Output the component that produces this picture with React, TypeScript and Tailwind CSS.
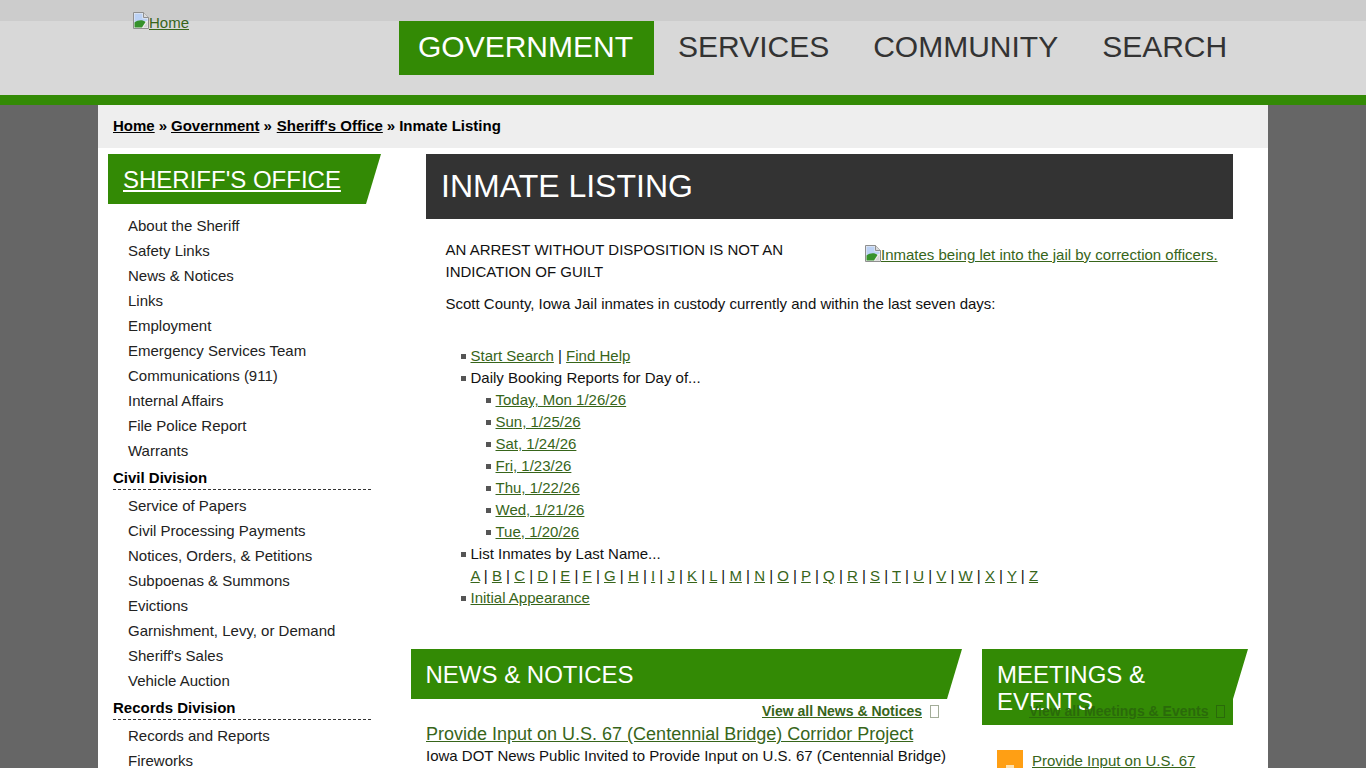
const BrokenImg = () => (
  <svg width="16" height="17" viewBox="0 0 16 17" className="inline-block shrink-0 align-baseline">
    <path d="M0.5 0.5H10.5L15.5 5.5V16.5H0.5Z" fill="#f0f0f0" stroke="#8f8f8f" />
    <path d="M10.5 0.5V5.5H15.5" fill="#dcdcdc" stroke="#8f8f8f" />
    <path d="M1.5 1.5H9.5V6.5H14.5V9L1.5 11Z" fill="#bcd2f5" />
    <path d="M1.5 15.5V10.5C5 7.5 10 7.5 12.5 10L9 15.5Z" fill="#36922c" />
    <path d="M10 15.5L14.5 9.5V15.5Z" fill="#d4d4d4" />
  </svg>
);

const green = "text-[#37651a]";

const L = ({ children }: { children: React.ReactNode }) => (
  <a href="#" className="text-[#37651a] underline">{children}</a>
);

const Tofu = ({ c }: { c: string }) => <span className={`inline-block h-[13px] w-[9px] border ${c}`} />;

const sheriff = ["About the Sheriff", "Safety Links", "News & Notices", "Links", "Employment", "Emergency Services Team", "Communications (911)", "Internal Affairs", "File Police Report", "Warrants"];
const civil = ["Service of Papers", "Civil Processing Payments", "Notices, Orders, & Petitions", "Subpoenas & Summons", "Evictions", "Garnishment, Levy, or Demand", "Sheriff's Sales", "Vehicle Auction"];
const records = ["Records and Reports", "Fireworks"];
const days = ["Today, Mon 1/26/26", "Sun, 1/25/26", "Sat, 1/24/26", "Fri, 1/23/26", "Thu, 1/22/26", "Wed, 1/21/26", "Tue, 1/20/26"];
const letters = "A B C D E F G H I J K L M N O P Q R S T U V W X Y Z".split(" ");

const Nav = ({ items }: { items: string[] }) => (
  <ul>
    {items.map((t) => (
      <li key={t} className="h-[25px] pl-[30px] leading-[25px] text-[#222]">{t}</li>
    ))}
  </ul>
);

const Sec = ({ children }: { children: React.ReactNode }) => (
  <div className="mt-[2px] ml-[15px] h-[25px] w-[258px] border-b border-dashed border-[#333] font-bold leading-[26px] text-black">{children}</div>
);

const Bullet = ({ children, x = "" }: { children: React.ReactNode; x?: string }) => (
  <li className={`relative h-[22px] leading-[22px] ${x}`}>
    <span className="absolute left-[-10px] top-[9px] h-[5px] w-[5px] bg-[#555]" />
    {children}
  </li>
);

export default function App() {
  return (
    <div className="h-[768px] overflow-hidden bg-[#666] text-[15px] text-[#111]" style={{ fontFamily: '"Liberation Sans", Arial, sans-serif' }}>
      <header className="h-[105px] border-b-[10px] border-[#338a05] bg-[#d8d8d8]">
        <div className="h-[21px] bg-[#ccc]" />
        <div className="relative flex h-[74px] pl-[399px]">
          <a href="#" className="absolute left-[133px] top-[-9px] flex items-start text-[15px] text-[#37651a] underline">
            <BrokenImg /><span className="mt-[1px] leading-[20px]">Home</span>
          </a>
          <nav className="flex h-[54px] items-center pb-[3px] text-[30px] text-[#333]">
            <span className="mb-[-3px] flex h-[54px] items-center bg-[#338a05] pr-[21px] pb-[3px] pl-[19px] text-white">GOVERNMENT</span>
            <span className="ml-[24px]">SERVICES</span>
            <span className="ml-[44px]">COMMUNITY</span>
            <span className="ml-[44px]">SEARCH</span>
          </nav>
        </div>
      </header>

      <div className="mx-auto h-[663px] w-[1170px] overflow-hidden bg-white">
        <div className="flex h-[43px] items-center bg-[#eee] pl-[15px] text-[15px] font-bold text-black">
          <a href="#" className="underline">Home</a><span className="mx-[4px]">»</span>
          <a href="#" className="underline">Government</a><span className="ml-[4px] mr-[5px]">»</span>
          <a href="#" className="underline">Sheriff's Office</a><span className="mx-[4px]">»</span>
          <span>Inmate Listing</span>
        </div>

        <div className="flex">
          <aside className="w-[273px] shrink-0">
            <div className="mt-[6px] ml-[10px] flex h-[50px] w-[273px] items-center bg-[#338a05] pl-[15px] text-[24px] text-white [clip-path:polygon(0_0,100%_0,258px_100%,0_100%)]">
              <a href="#" className="mt-[1px] underline">SHERIFF'S OFFICE</a>
            </div>
            <div className="pt-[9px]">
              <Nav items={sheriff} />
              <Sec>Civil Division</Sec>
              <div className="pt-[3px]"><Nav items={civil} /></div>
              <Sec>Records Division</Sec>
              <div className="pt-[3px]"><Nav items={records} /></div>
            </div>
          </aside>

          <main className="ml-[40px] w-[857px] shrink-0">
            <div className="mt-[6px] ml-[15px] flex h-[65px] w-[807px] items-center bg-[#333] pb-[2px] pl-[15px] text-[32px] text-white">INMATE LISTING</div>
            <div className="relative ml-[34.5px] h-[430px] pt-[20px] leading-[22px]">
              <a href="#" className="absolute left-[419.5px] top-[26px] flex items-start text-[#37651a] underline">
                <BrokenImg /><span className="leading-[20px]">Inmates being let into the jail by correction officers.</span>
              </a>
              <p className="w-[360px]">AN ARREST WITHOUT DISPOSITION IS NOT AN INDICATION OF GUILT</p>
              <p className="mt-[10px]">Scott County, Iowa Jail inmates in custody currently and within the last seven days:</p>
              <ul className="mt-[30px] pl-[25px]">
                <Bullet><L>Start Search</L> | <L>Find Help</L></Bullet>
                <Bullet>Daily Booking Reports for Day of...</Bullet>
                {days.map((d) => <Bullet key={d} x="ml-[25px]"><L>{d}</L></Bullet>)}
                <Bullet>List Inmates by Last Name...</Bullet>
                <li className="h-[22px] leading-[22px]">
                  {letters.map((c, i) => (
                    <span key={c}>{i > 0 && " | "}<L>{c}</L></span>
                  ))}
                </li>
                <Bullet><L>Initial Appearance</L></Bullet>
              </ul>
            </div>

            <div className="flex">
              <section className="w-[551px] shrink-0">
                <div className="flex h-[50px] items-center bg-[#338a05] pl-[14.5px] text-[24px] text-white [clip-path:polygon(0_0,100%_0,536px_100%,0_100%)]"><span className="mt-[1px]">NEWS &amp; NOTICES</span></div>
                <div className="flex h-[24px] items-center justify-end pr-[23px] text-[14px] font-bold">
                  <a href="#" className={`${green} underline`}>View all News &amp; Notices</a>
                  <span className="ml-[8px] flex"><Tofu c="border-[#a3ad99]" /></span>
                </div>
                <a href="#" className={`ml-[15px] block text-[18px] leading-[22px] ${green} underline`}>Provide Input on U.S. 67 (Centennial Bridge) Corridor Project</a>
                <p className="ml-[15px] leading-[22px]">Iowa DOT News Public Invited to Provide Input on U.S. 67 (Centennial Bridge)</p>
              </section>

              <section className="relative ml-[20px] w-[266px] shrink-0">
                <div className="h-[76px] bg-[#338a05] pt-[12px] pr-[30px] pl-[15px] text-[24px] leading-[27px] text-white [clip-path:polygon(0_0,100%_0,251px_50px,251px_100%,0_100%)]">MEETINGS &amp; EVENTS</div>
                <div className="absolute left-[47px] top-[53px] flex h-[19px] items-center text-[14px] font-bold">
                  <a href="#" className="text-[#2a6a0a] underline">View all Meetings &amp; Events</a>
                  <span className="ml-[8px] flex"><Tofu c="border-[#2a6a0a]" /></span>
                </div>
                <div className="mt-[25px] flex pl-[15px]">
                  <div className="flex h-[40px] w-[26px] shrink-0 justify-center bg-[#ff9f14] pt-[15px]">
                    <span className="h-[5px] w-[8px] bg-[#ffe2b0]" />
                  </div>
                  <a href="#" className={`ml-[9px] text-[15px] leading-[22px] ${green} underline`}>Provide Input on U.S. 67</a>
                </div>
              </section>
            </div>
          </main>
        </div>
      </div>
    </div>
  );
}
